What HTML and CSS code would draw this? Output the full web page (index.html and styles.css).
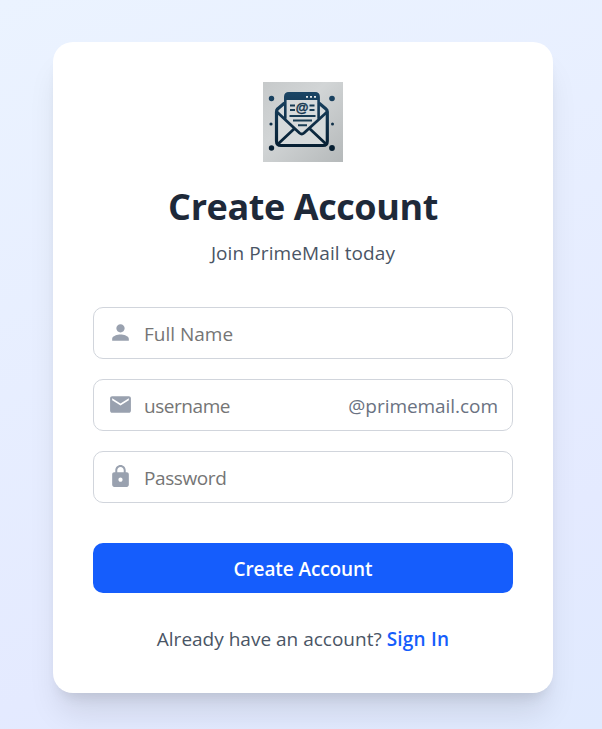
FILE: index.html
```html
<!DOCTYPE html>
<html lang="en">
<head>
<meta charset="utf-8">
<title>Create Account</title>
<link rel="stylesheet" href="styles.css">
</head>
<body>
<main class="card">
  <header class="intro">
    <svg class="logo" viewBox="0 0 80 80" aria-hidden="true">
      <defs>
        <linearGradient id="paper" x1="0" y1="0" x2="1" y2="1"><stop offset="0" stop-color="#c6c9ca"/><stop offset=".4" stop-color="#d2d5d6"/><stop offset="1" stop-color="#b5b9ba"/></linearGradient>
        <linearGradient id="ink" gradientUnits="userSpaceOnUse" x1="0" y1="10" x2="0" y2="66"><stop offset="0" stop-color="#1b4565"/><stop offset="1" stop-color="#061e31"/></linearGradient>
      </defs>
      <rect width="80" height="80" fill="url(#paper)"/>
      <g fill="url(#ink)">
        <circle cx="8.5" cy="16.5" r="2.7"/><circle cx="69" cy="16.5" r="2.8"/>
        <circle cx="8" cy="42" r="1.6"/><circle cx="69.5" cy="42" r="1.5"/>
        <circle cx="8.5" cy="66" r="2.7"/><circle cx="69" cy="66" r="2.9"/>
      </g>
      <path d="M14 28 22 21V12H56V21L64 28V63H14Z" fill="#d6dadb"/>
      <g fill="none" stroke="url(#ink)" stroke-width="3.2" stroke-linejoin="round" stroke-linecap="round">
        <path d="M21 21.500 14.500 27Q13.500 28 13.500 30V59Q13.500 63.500 18 63.500H60Q64.300 63.500 64.300 59V30Q64.300 28 63 27L56.500 21.500"/>
        <path d="M14 30 36.500 51Q38.800 53 41 51L64 30M15 62 31.500 46.500M63 62 46.500 46.500" stroke-width="2.8"/>
        <path d="M22.300 36V15Q22.300 11.300 26 11.300H52Q55.600 11.300 55.600 15V36" stroke-width="2.600"/>
      </g>
      <path d="M22 18V15Q22 10.500 26 10.500H52Q56 10.500 56 15V18Z" fill="url(#ink)"/>
      <path d="M43 14.800h2M47 14.800h2M51 14.800h2" stroke="#e6eaeb" stroke-width="1.800"/>
      <path d="M27 23.500h5M27 28h5M46.500 23.500h5M46.500 28h5M26.500 34h26M30 38.500h19M35 43.200h9" stroke="#173b53" stroke-width="1.900"/>
      <text class="at" x="39.200" y="30" text-anchor="middle">@</text>
    </svg>
    <h1 class="title">Create Account</h1>
    <p class="tagline">Join PrimeMail today</p>
  </header>
  <form class="form">
    <label class="field">
      <svg class="icon" viewBox="0 0 24 24"><path d="M12 12c2.210 0 4-1.790 4-4s-1.790-4-4-4-4 1.790-4 4 1.790 4 4 4zm0 2c-2.670 0-8 1.340-8 4v2h16v-2c0-2.660-5.330-4-8-4z"/></svg>
      <input class="input name" type="text" placeholder="Full Name">
    </label>
    <label class="field">
      <svg class="icon" viewBox="0 0 24 24"><path d="M20 4H4c-1.100 0-1.990.9-1.990 2L2 18c0 1.100.9 2 2 2h16c1.100 0 2-.9 2-2V6c0-1.100-.9-2-2-2zm0 4-8 5-8-5V6l8 5 8-5v2z"/></svg>
      <input class="input user" type="text" placeholder="username">
      <span class="domain">@primemail.com</span>
    </label>
    <label class="field">
      <svg class="icon" viewBox="0 0 24 24"><path d="M18 8h-1V6c0-2.760-2.240-5-5-5S7 3.240 7 6v2H6c-1.100 0-2 .9-2 2v10c0 1.100.9 2 2 2h12c1.100 0 2-.9 2-2V10c0-1.100-.9-2-2-2zm-6 9c-1.100 0-2-.9-2-2s.9-2 2-2 2 .9 2 2-.9 2-2 2zm3.100-9H8.900V6c0-1.710 1.390-3.100 3.100-3.100s3.100 1.390 3.100 3.100v2z"/></svg>
      <input class="input pass" type="password" placeholder="Password">
    </label>
    <button class="submit" type="button">Create Account</button>
  </form>
  <p class="footer"><span class="question">Already have an account?</span><a class="link" href="#">Sign In</a></p>
</main>
</body>
</html>
```
FILE: styles.css
```css
* { box-sizing: border-box; margin: 0; }
body {
  min-height: 729px;
  padding: 42px 49px 36px 53px;
  font: 19px/30px "Open Sans", "Noto Sans", sans-serif;
  color: #4a5565;
  background: linear-gradient(160deg, #ebf3ff, #e4eaff 75%, #e0eafe);
}
.card {
  width: 500px;
  height: 651px;
  padding: 40px;
  background: #fff;
  border-radius: 20px;
  box-shadow: 0 25px 31px -6px rgba(0, 0, 0, .1), 0 10px 12.5px -7.5px rgba(0, 0, 0, .1);
}
.intro { display: flex; flex-direction: column; align-items: center; }
.logo { width: 80px; height: 80px; }
.at { font: bold 13px "Liberation Sans", sans-serif; fill: #123650; stroke: #123650; stroke-width: .4px; }
.title { margin-top: 20px; font-size: 36px; line-height: 50px; font-weight: 700; letter-spacing: -.42px; color: #1e2939; white-space: nowrap; }
.tagline { margin-top: 6px; letter-spacing: .1px; white-space: nowrap; }
.form { display: flex; flex-direction: column; gap: 20px; margin-top: 39px; }
.field {
  display: flex;
  align-items: center;
  height: 52px;
  padding: 0 14px;
  border: 1px solid #d1d5dc;
  border-radius: 10px;
}
.icon { flex: none; width: 25px; height: 25px; margin-top: -2px; fill: #99a1af; }
.input { flex: 1; min-width: 0; height: 50px; margin-left: 11px; padding: 2px 0 0; border: 0; outline: 0; background: none; font: inherit; }
.input::placeholder { color: #757575; opacity: 1; }
.user { letter-spacing: -.45px; }
.pass { letter-spacing: -.4px; }
.domain { padding-top: 2px; letter-spacing: -.05px; color: #6a7282; }
.submit { height: 50px; margin-top: 20px; padding: 2px 0 0; border: 0; border-radius: 10px; background: #155dfc; color: #fff; font: 600 19px/30px "Open Sans", "Noto Sans", sans-serif; letter-spacing: -.1px; }
.footer { display: flex; justify-content: center; gap: 5px; margin-top: 31px; white-space: nowrap; }
.link { color: #155dfc; font-weight: 600; letter-spacing: .2px; text-decoration: none; }
```
